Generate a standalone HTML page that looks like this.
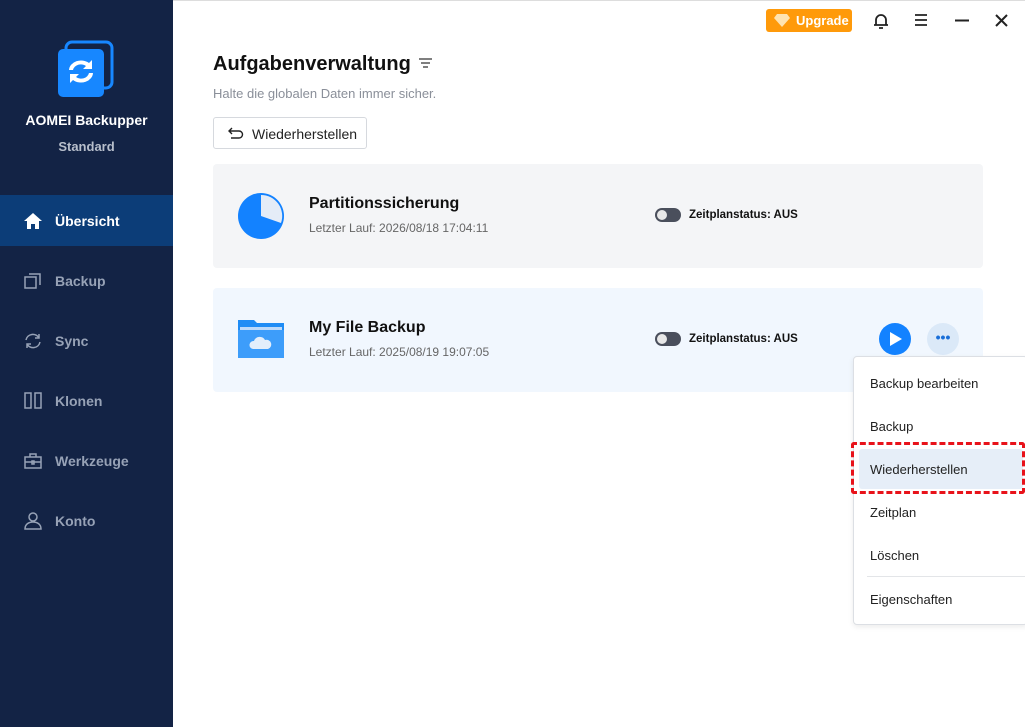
<!DOCTYPE html>
<html><head><meta charset="utf-8"><style>
*{margin:0;padding:0;box-sizing:border-box}
body{width:1025px;height:727px;overflow:hidden;font-family:"Liberation Sans",sans-serif;background:#fff;position:relative}
.sb{position:absolute;left:0;top:0;width:173px;height:727px;background:#132345}
.brand{position:absolute;top:112px;width:173px;text-align:center;color:#fff;font-weight:bold;font-size:14px}
.std{position:absolute;top:139px;width:173px;text-align:center;color:#b8bfcc;font-weight:bold;font-size:13px}
.nav{position:absolute;left:0;width:173px;height:51px;color:#97a2b6;font-size:14px;font-weight:bold}
.nav span{position:absolute;left:55px;top:18px}
.nav svg{position:absolute;left:23px;top:16px}
.act{background:#0c3d78;color:#fff}
.main{position:absolute;left:173px;top:0;right:0;bottom:0;border-top:1px solid #ddd}
h1{position:absolute;left:213px;top:53px;font-size:20px;font-weight:bold;color:#111}
.sub{position:absolute;left:213px;top:86px;font-size:13px;color:#8a8f99}
.btn{position:absolute;left:213px;top:117px;width:154px;height:32px;border:1px solid #d6d9de;border-radius:3px;font-size:14px;color:#222}
.btn span{position:absolute;left:38px;top:8px}
.card{position:absolute;left:213px;width:770px;height:104px;border-radius:4px}
.t{position:absolute;left:96px;top:31px;font-size:16px;font-weight:bold;color:#111}
.d{position:absolute;left:96px;top:57px;font-size:12px;color:#666}
.tg{position:absolute;left:442px;top:44px;width:26px;height:14px;border-radius:7px;background:#4a4f5c}
.tg:after{content:"";position:absolute;left:2px;top:2px;width:10px;height:10px;border-radius:50%;background:#e8e8e8}
.zs{position:absolute;left:476px;top:45px;font-size:11.5px;font-weight:bold;color:#111}
.menu{position:absolute;left:853px;top:356px;width:175px;height:269px;background:#fff;border:1px solid #dcdfe4;border-radius:4px;box-shadow:0 2px 6px rgba(0,0,0,.08)}
.mi{position:absolute;left:16px;font-size:13px;color:#222}
</style></head><body>
<div class="sb">
<svg style="position:absolute;left:57px;top:40px" width="58" height="58" viewBox="0 0 58 58">
<rect x="9" y="2" width="46" height="46" rx="6" fill="none" stroke="#1787ff" stroke-width="3"/>
<rect x="1" y="9" width="46" height="48" rx="5" fill="#1787ff"/>
<path d="M12 30a12 10 0 0 1 20-7l3-3v9h-9l3-3a8 7 0 0 0-13 4z" fill="#fff"/>
<path d="M36 33a12 10 0 0 1-20 7l-3 3v-9h9l-3 3a8 7 0 0 0 13-4z" fill="#fff"/>
</svg>
<div class="brand">AOMEI Backupper</div><div class="std">Standard</div>
<div class="nav act" style="top:195px"><svg width="20" height="20" viewBox="0 0 20 20"><path d="M10 2L1 10h3v8h4v-5h4v5h4v-8h3z" fill="#fff"/></svg><span>Übersicht</span></div>
<div class="nav" style="top:255px"><svg width="20" height="20" viewBox="0 0 20 20" fill="none" stroke="#97a2b6" stroke-width="1.5"><rect x="2" y="6" width="11" height="11"/><path d="M6 3h11v11"/></svg><span>Backup</span></div>
<div class="nav" style="top:315px"><svg width="20" height="20" viewBox="0 0 20 20" fill="none" stroke="#97a2b6" stroke-width="1.5"><path d="M3 9a7 7 0 0 1 13-2M17 11a7 7 0 0 1-13 2M16 3v4h-4M4 17v-4h4"/></svg><span>Sync</span></div>
<div class="nav" style="top:375px"><svg width="20" height="20" viewBox="0 0 20 20" fill="none" stroke="#97a2b6" stroke-width="1.5"><rect x="2" y="2" width="6" height="15"/><rect x="12" y="2" width="6" height="15"/></svg><span>Klonen</span></div>
<div class="nav" style="top:435px"><svg width="20" height="20" viewBox="0 0 20 20" fill="none" stroke="#97a2b6" stroke-width="1.5"><rect x="2" y="6" width="16" height="11"/><path d="M7 6V3h6v3M2 11h16"/><rect x="9" y="10" width="2" height="3"/></svg><span>Werkzeuge</span></div>
<div class="nav" style="top:495px"><svg width="20" height="20" viewBox="0 0 20 20" fill="none" stroke="#97a2b6" stroke-width="1.5"><circle cx="10" cy="6" r="4"/><path d="M2 18c0-5 4-7 8-7s8 2 8 7z"/></svg><span>Konto</span></div>
</div>
<div class="main"></div>
<div style="position:absolute;left:766px;top:9px;width:86px;height:23px;background:#ff9a0a;border-radius:3px;color:#fff;font-size:13px;font-weight:bold">
<svg style="position:absolute;left:8px;top:5px" width="16" height="13" viewBox="0 0 16 13"><path d="M3 0h10l3 4-8 9-8-9z" fill="#ffe3b0"/></svg><span style="position:absolute;left:30px;top:4px">Upgrade</span></div>
<svg style="position:absolute;left:873px;top:12px" width="16" height="18" viewBox="0 0 16 18" fill="none" stroke="#222" stroke-width="1.8"><path d="M3 13V8a5 5 0 0 1 10 0v5zM1 13h14M6 16h4"/></svg>
<svg style="position:absolute;left:914px;top:13px" width="14" height="14" viewBox="0 0 14 14" stroke="#222" stroke-width="1.8"><path d="M1 2h12M1 7h12M1 12h12"/></svg>
<svg style="position:absolute;left:955px;top:19px" width="14" height="3"><path d="M0 1.5h14" stroke="#222" stroke-width="2"/></svg>
<svg style="position:absolute;left:995px;top:14px" width="13" height="13" stroke="#222" stroke-width="2"><path d="M1 1l11 11M12 1L1 12"/></svg>
<h1>Aufgabenverwaltung</h1>
<svg style="position:absolute;left:419px;top:58px" width="13" height="10" stroke="#333" stroke-width="1.3"><path d="M0 1h13M2 5h9M4 9h5"/></svg>
<div class="sub">Halte die globalen Daten immer sicher.</div>
<div class="btn"><svg style="position:absolute;left:14px;top:9px" width="16" height="12" fill="none" stroke="#222" stroke-width="1.4"><path d="M4 1L1 4l3 3M1 4h10a3.5 3.5 0 0 1 0 7H3"/></svg><span>Wiederherstellen</span></div>
<div class="card" style="top:164px;background:#f4f5f7">
<svg style="position:absolute;left:24px;top:28px" width="48" height="48" viewBox="0 0 48 48"><circle cx="24" cy="24" r="23" fill="#1382ff"/><path d="M24 24V3a21 21 0 0 1 20 28z" fill="#e4ecf7"/></svg>
<div class="t">Partitionssicherung</div><div class="d">Letzter Lauf: 2026/08/18 17:04:11</div>
<div class="tg"></div><div class="zs">Zeitplanstatus: AUS</div></div>
<div class="card" style="top:288px;background:#f1f7fe">
<svg style="position:absolute;left:25px;top:32px" width="46" height="38" viewBox="0 0 46 38"><path d="M0 0h16l3 3h27v35H0z" fill="#1f8cf5"/><rect x="2" y="7" width="42" height="3" fill="#bcd9fa"/><path d="M0 10h46v28H0z" fill="#3d9dfa"/><path d="M15 29a4 4 0 0 1 1-8 6 6 0 0 1 11-1 4.5 4.5 0 0 1 3 9z" fill="#e3eefb"/></svg>
<div class="t">My File Backup</div><div class="d">Letzter Lauf: 2025/08/19 19:07:05</div>
<div class="tg"></div><div class="zs">Zeitplanstatus: AUS</div>
<div style="position:absolute;left:666px;top:35px;width:32px;height:32px;border-radius:50%;background:#1382ff"><svg style="position:absolute;left:11px;top:9px" width="12" height="14"><path d="M0 0l12 7-12 7z" fill="#fff"/></svg></div>
<div style="position:absolute;left:714px;top:35px;width:32px;height:32px;border-radius:50%;background:#dbe9f8;color:#1a6fd8;font-weight:bold;font-size:14px;text-align:center;line-height:28px">•••</div>
</div>
<div class="menu">
<div class="mi" style="top:19px">Backup bearbeiten</div>
<div class="mi" style="top:62px">Backup</div>
<div style="position:absolute;left:5px;top:92px;width:164px;height:40px;background:#e6eef8;border-radius:3px"></div>
<div class="mi" style="top:105px">Wiederherstellen</div>
<div class="mi" style="top:148px">Zeitplan</div>
<div class="mi" style="top:191px">Löschen</div>
<div style="position:absolute;left:13px;top:219px;width:162px;height:1px;background:#e3e5e8"></div>
<div class="mi" style="top:235px">Eigenschaften</div>
</div>
<div style="position:absolute;left:851px;top:442px;width:174px;height:52px;border:3px dashed #e8121a;border-radius:3px"></div>
</body></html>
